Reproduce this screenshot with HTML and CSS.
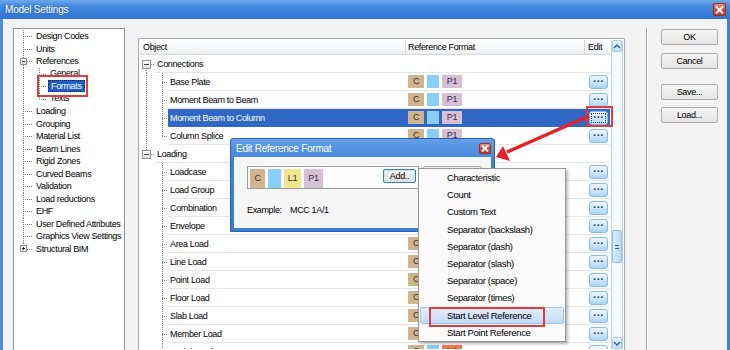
FILE: index.html
```html
<!DOCTYPE html>
<html lang="en">
<head>
  <meta charset="UTF-8">
  <title>Model Settings</title>
  <link rel="stylesheet" href="styles.css">
</head>
<body>

  <div class="window">
    <div class="titlebar">
      <span class="title">Model Settings</span>
      <span class="close">
        <svg width="9" height="8" viewBox="0 0 9 8"><path d="M1 0.5 L8 7.5 M8 0.5 L1 7.5" stroke="#fff" stroke-width="2"/></svg>
      </span>
    </div>

    <div class="frame">
      <!-- Settings tree -->
      <div class="nav">
        <ul class="tree">
          <li class="top"><span class="gut"></span><span class="lbl">Design Codes</span></li>
          <li class="top"><span class="gut"></span><span class="lbl">Units</span></li>
          <li class="top open"><span class="gut"><span class="exp"></span></span><span class="lbl">References</span></li>
          <li class="sub"><span class="gut"></span><span class="lbl">General</span></li>
          <li class="sub"><span class="gut"></span><span class="lbl picked">Formats</span></li>
          <li class="sub end"><span class="gut"></span><span class="lbl">Texts</span></li>
          <li class="top"><span class="gut"></span><span class="lbl">Loading</span></li>
          <li class="top"><span class="gut"></span><span class="lbl">Grouping</span></li>
          <li class="top"><span class="gut"></span><span class="lbl">Material List</span></li>
          <li class="top"><span class="gut"></span><span class="lbl">Beam Lines</span></li>
          <li class="top"><span class="gut"></span><span class="lbl">Rigid Zones</span></li>
          <li class="top"><span class="gut"></span><span class="lbl">Curved Beams</span></li>
          <li class="top"><span class="gut"></span><span class="lbl">Validation</span></li>
          <li class="top"><span class="gut"></span><span class="lbl">Load reductions</span></li>
          <li class="top"><span class="gut"></span><span class="lbl">EHF</span></li>
          <li class="top"><span class="gut"></span><span class="lbl">User Defined Attributes</span></li>
          <li class="top"><span class="gut"></span><span class="lbl">Graphics View Settings</span></li>
          <li class="top end closed"><span class="gut"><span class="exp plus"></span></span><span class="lbl">Structural BIM</span></li>
        </ul>
      </div>

      <!-- Reference format grid -->
      <div class="grid">
        <div class="grid-main">
          <div class="grid-head">
            <div class="hc hc-obj">Object</div>
            <div class="hc hc-ref">Reference Format</div>
            <div class="hc hc-edit">Edit</div>
          </div>

          <div class="row grp first"><span class="gut"><span class="exp"></span></span><div class="cell"><span class="name">Connections</span></div></div>
          <div class="row c-mid"><span class="gut"></span><div class="cell"><span class="name">Base Plate</span><span class="fmt"><i class="chip tan">C</i><i class="chip sky"></i><i class="chip thistle">P1</i></span><span class="edit"><b class="dots">···</b></span></div></div>
          <div class="row c-mid"><span class="gut"></span><div class="cell"><span class="name">Moment Beam to Beam</span><span class="fmt"><i class="chip tan">C</i><i class="chip sky"></i><i class="chip thistle">P1</i></span><span class="edit"><b class="dots">···</b></span></div></div>
          <div class="row c-mid selected"><span class="gut"></span><div class="cell"><span class="name">Moment Beam to Column</span><span class="fmt"><i class="chip tan">C</i><i class="chip sky"></i><i class="chip thistle">P1</i></span><span class="edit"><b class="dots focus">···</b></span></div></div>
          <div class="row c-mid-end"><span class="gut"></span><div class="cell"><span class="name">Column Splice</span><span class="fmt"><i class="chip tan">C</i><i class="chip sky"></i><i class="chip thistle">P1</i></span><span class="edit"><b class="dots">···</b></span></div></div>
          <div class="row grp last"><span class="gut"><span class="exp"></span></span><div class="cell"><span class="name">Loading</span></div></div>
          <div class="row c"><span class="gut"></span><div class="cell"><span class="name">Loadcase</span><span class="fmt"><i class="chip tan">C</i><i class="chip sky"></i><i class="chip khaki">L1</i></span><span class="edit"><b class="dots">···</b></span></div></div>
          <div class="row c"><span class="gut"></span><div class="cell"><span class="name">Load Group</span><span class="fmt"><i class="chip tan">C</i><i class="chip sky"></i><i class="chip khaki">L1</i></span><span class="edit"><b class="dots">···</b></span></div></div>
          <div class="row c"><span class="gut"></span><div class="cell"><span class="name">Combination</span><span class="fmt"><i class="chip tan">C</i><i class="chip sky"></i><i class="chip khaki">L1</i></span><span class="edit"><b class="dots">···</b></span></div></div>
          <div class="row c"><span class="gut"></span><div class="cell"><span class="name">Envelope</span><span class="fmt"><i class="chip tan">C</i><i class="chip sky"></i><i class="chip khaki">L1</i></span><span class="edit"><b class="dots">···</b></span></div></div>
          <div class="row c"><span class="gut"></span><div class="cell"><span class="name">Area Load</span><span class="fmt"><i class="chip tan">C</i><i class="chip sky"></i><i class="chip khaki">L1</i></span><span class="edit"><b class="dots">···</b></span></div></div>
          <div class="row c"><span class="gut"></span><div class="cell"><span class="name">Line Load</span><span class="fmt"><i class="chip tan">C</i><i class="chip sky"></i><i class="chip khaki">L1</i></span><span class="edit"><b class="dots">···</b></span></div></div>
          <div class="row c"><span class="gut"></span><div class="cell"><span class="name">Point Load</span><span class="fmt"><i class="chip tan">C</i><i class="chip sky"></i><i class="chip khaki">L1</i></span><span class="edit"><b class="dots">···</b></span></div></div>
          <div class="row c"><span class="gut"></span><div class="cell"><span class="name">Floor Load</span><span class="fmt"><i class="chip tan">C</i><i class="chip sky"></i><i class="chip khaki">L1</i></span><span class="edit"><b class="dots">···</b></span></div></div>
          <div class="row c"><span class="gut"></span><div class="cell"><span class="name">Slab Load</span><span class="fmt"><i class="chip tan">C</i><i class="chip sky"></i><i class="chip khaki">L1</i></span><span class="edit"><b class="dots">···</b></span></div></div>
          <div class="row c"><span class="gut"></span><div class="cell"><span class="name">Member Load</span><span class="fmt"><i class="chip tan">C</i><i class="chip sky"></i><i class="chip khaki">L1</i></span><span class="edit"><b class="dots">···</b></span></div></div>
          <div class="row c"><span class="gut"></span><div class="cell"><span class="name">Nodal Load</span><span class="fmt"><i class="chip tan">C</i><i class="chip sky"></i><i class="chip tomato">N1</i></span><span class="edit"><b class="dots">···</b></span></div></div>
        </div>

        <div class="vscroll">
          <div class="track">
            <span class="sbtn"><svg width="8" height="5" viewBox="0 0 8 5"><path d="M1 4 L4 1 L7 4" fill="none" stroke="#2b5b9a" stroke-width="1.4"/></svg></span>
            <span class="thumb"></span>
            <span class="sbtn down"><svg width="8" height="5" viewBox="0 0 8 5"><path d="M1 1 L4 4 L7 1" fill="none" stroke="#2b5b9a" stroke-width="1.4"/></svg></span>
          </div>
        </div>
      </div>

      <div class="divider"></div>

      <div class="actions">
        <button class="btn">OK</button>
        <button class="btn cancel">Cancel</button>
        <button class="btn save">Save...</button>
        <button class="btn load">Load...</button>
      </div>
    </div>

    <!-- Edit Reference Format dialog -->
    <div class="dialog">
      <div class="dlg-title">
        <span class="dlg-name">Edit Reference Format</span>
        <span class="dlg-close">
          <svg width="8" height="7" viewBox="0 0 8 7"><path d="M1 0.5 L7 6.5 M7 0.5 L1 6.5" stroke="#fff" stroke-width="1.8"/></svg>
        </span>
      </div>
      <div class="dlg-body">
        <div class="dlg-row">
          <div class="fmt-box">
            <i class="dchip tan">C</i><i class="dchip sky sep"></i><i class="dchip khaki">L1</i><i class="dchip thistle">P1</i>
            <button class="add-btn">Add..</button>
          </div>
          <button class="dlg-btn">Remove</button>
        </div>
        <div class="example"><span class="ex-lbl">Example:</span><span>MCC 1A/1</span></div>
      </div>
    </div>

    <!-- Add.. dropdown -->
    <ul class="menu">
      <li>Characteristic</li>
      <li>Count</li>
      <li>Custom Text</li>
      <li>Separator (backslash)</li>
      <li>Separator (dash)</li>
      <li>Separator (slash)</li>
      <li>Separator (space)</li>
      <li>Separator (times)</li>
      <li class="hot">Start Level Reference</li>
      <li>Start Point Reference</li>
    </ul>

    <!-- Red callouts -->
    <svg class="marks" width="730" height="350" viewBox="0 0 730 350">
      <g fill="none" stroke="#e23b3e" stroke-width="2">
        <rect x="38" y="76" width="49" height="20"/>
        <rect x="587" y="107" width="25" height="19"/>
        <rect x="430" y="308" width="114" height="18"/>
      </g>
      <line x1="589" y1="116" x2="507" y2="152" stroke="#e8202a" stroke-width="3.5"/>
      <polygon points="496,157 503,146 510,161" fill="#e8202a"/>
    </svg>
  </div>

</body>
</html>
```

FILE: styles.css
```css
:root {
  --dv: repeating-linear-gradient(to bottom, #858585 0 1px, transparent 1px 2px);
  --dh: repeating-linear-gradient(to right, #858585 0 1px, transparent 1px 2px);
}

body {
  margin: 0;
  font-family: 'Liberation Sans', Arial, sans-serif;
  font-size: 9px;
  letter-spacing: -0.35px;
  color: #000;
}

.window {
  position: relative;
  width: 730px;
  height: 350px;
  overflow: hidden;
  background: linear-gradient(to right, #4a8ee0, #3c80d8);
}

.titlebar {
  height: 19px;
  display: flex;
  align-items: center;
  padding: 0 4px 0 5px;
  background: linear-gradient(#6ea8ec, #4288de 35%, #2f75d4);
  color: #fff;
  font-size: 10px;
  letter-spacing: -0.2px;
}

.title {
  flex: 1;
  text-shadow: 0 0 3px rgba(0, 0, 40, 0.35);
}

.close {
  width: 13px;
  height: 13px;
  box-sizing: border-box;
  display: flex;
  align-items: center;
  justify-content: center;
  border: 1px solid #9a2e22;
  border-radius: 2px;
  background: linear-gradient(#ee9080, #d34b35 50%, #c23a24);
}

.frame {
  display: flex;
  align-items: flex-start;
  height: 331px;
  margin: 0 3px;
  background: #f3f3f3;
  overflow: hidden;
}

/* ---- left tree ---- */
.nav {
  flex: none;
  width: 112px;
  height: 340px;
  margin: 9px 0 0 10px;
  box-sizing: border-box;
  border: 1px solid #8d9298;
  background: #fff;
  padding-top: 1px;
}

.tree {
  list-style: none;
  margin: 0;
  padding: 0;
}

.tree li {
  display: flex;
  align-items: center;
  height: 12.5px;
  white-space: nowrap;
}

.tree .gut {
  flex: none;
  height: 100%;
  display: flex;
  align-items: center;
}

.tree .top .gut {
  width: 22px;
  background: var(--dv) 9px 0 / 1px 100% no-repeat, var(--dh) 9px 6px / 10px 1px no-repeat;
}

.tree .top.open .gut {
  background: var(--dv) 9px 0 / 1px 100% no-repeat, var(--dh) 13px 6px / 6px 1px no-repeat;
}

.tree .top.closed .gut {
  background: var(--dv) 9px 0 / 1px 3px no-repeat, var(--dh) 13px 6px / 6px 1px no-repeat;
}

.tree .sub .gut {
  width: 34px;
  background: var(--dv) 9px 0 / 1px 100% no-repeat, var(--dv) 25px 0 / 1px 100% no-repeat, var(--dh) 25px 6px / 8px 1px no-repeat;
}

.tree .sub.end .gut {
  background: var(--dv) 9px 0 / 1px 100% no-repeat, var(--dv) 25px 0 / 1px 7px no-repeat, var(--dh) 25px 6px / 8px 1px no-repeat;
}

.tree .exp {
  width: 7px;
  height: 7px;
  margin-left: 6px;
  box-sizing: border-box;
  border: 1px solid #8f8f8f;
  background: linear-gradient(#333, #333) center / 3px 1px no-repeat, linear-gradient(#fff, #e4e4e4);
}

.tree .exp.plus {
  background: linear-gradient(#333, #333) center / 3px 1px no-repeat, linear-gradient(#333, #333) center / 1px 3px no-repeat, linear-gradient(#fff, #e4e4e4);
}

.tree .sub .lbl {
  padding: 0 2px;
  line-height: 11px;
}

.tree .lbl.picked {
  width: 37px;
  box-sizing: border-box;
  background: #1a5fd2;
  color: #fff;
  border: 1px dotted #222;
  line-height: 10px;
}

/* ---- grid ---- */
.grid {
  flex: none;
  display: flex;
  width: 487px;
  height: 313px;
  margin: 19px 0 0 13px;
  box-sizing: border-box;
  border: 1px solid #a4abb4;
  padding: 1px;
  background: #fff;
}

.grid-main {
  width: 470px;
  display: flex;
  flex-direction: column;
  overflow: hidden;
}

.grid-head {
  flex: none;
  display: flex;
  height: 15px;
  box-sizing: border-box;
  border-bottom: 1px solid #d5d5d5;
  background: linear-gradient(#fff, #eef0f2);
}

.hc {
  box-sizing: border-box;
  border-right: 1px solid #d5d5d5;
  padding-left: 3px;
  line-height: 14px;
}

.hc-obj { width: 266px; }
.hc-ref { width: 179px; padding-left: 2px; }
.hc-edit { width: 25px; border-right: none; }

.row {
  flex: none;
  display: flex;
  height: 18px;
}

.row .gut {
  flex: none;
  height: 100%;
}

.cell {
  flex: 1;
  min-width: 0;
  display: flex;
  align-items: center;
  box-sizing: border-box;
  border-bottom: 1px solid #e5e5e5;
  white-space: nowrap;
}

.name {
  flex: 1;
  padding-left: 2px;
}

.grp .gut {
  width: 15px;
  display: flex;
  align-items: center;
}

.grp.first .gut {
  background: var(--dh) 11px 9px / 4px 1px no-repeat, var(--dv) 6px 13px / 1px 5px no-repeat;
}

.grp.last .gut {
  background: var(--dh) 11px 9px / 4px 1px no-repeat, var(--dv) 6px 0 / 1px 5px no-repeat;
}

.grp .exp {
  width: 9px;
  height: 9px;
  margin-left: 2px;
  box-sizing: border-box;
  border: 1px solid #919191;
  background: linear-gradient(#444, #444) center / 5px 1px no-repeat, linear-gradient(#fff, #e2e2e2);
}

.c-mid .gut,
.c-mid-end .gut,
.c .gut {
  width: 28px;
}

.c-mid .gut {
  background: var(--dv) 6px 0 / 1px 100% no-repeat, var(--dv) 22px 0 / 1px 100% no-repeat, var(--dh) 22px 9px / 6px 1px no-repeat;
}

.c-mid-end .gut {
  background: var(--dv) 6px 0 / 1px 100% no-repeat, var(--dv) 22px 0 / 1px 10px no-repeat, var(--dh) 22px 9px / 6px 1px no-repeat;
}

.c .gut {
  background: var(--dv) 22px 0 / 1px 100% no-repeat, var(--dh) 22px 9px / 6px 1px no-repeat;
}

.selected .cell {
  background: #3168c6;
  border-bottom-color: #3168c6;
}

.selected .name {
  color: #fff;
}

.fmt {
  flex: none;
  width: 179px;
  box-sizing: border-box;
  display: flex;
  gap: 3px;
  padding-left: 2px;
}

.chip {
  display: block;
  height: 13px;
  font-style: normal;
  line-height: 13px;
  text-align: center;
  color: #333;
}

.chip.tan { width: 16px; }
.chip.sky { width: 12px; }
.chip.thistle,
.chip.khaki,
.chip.tomato { width: 20px; }

.tan { background: #d2b48c; }
.sky { background: #87cefa; }
.khaki { background: #f0e68c; }
.thistle { background: #d8bfd8; }
.tomato { background: #f6754f; }

.edit {
  flex: none;
  width: 25px;
  padding-left: 4px;
  box-sizing: border-box;
}

.dots {
  display: block;
  width: 19px;
  height: 14px;
  box-sizing: border-box;
  border: 1px solid #86b9e6;
  border-radius: 3px;
  background: linear-gradient(#eef7fe, #cfe7fb 50%, #acd5f7);
  color: #1d3f7a;
  font-size: 11px;
  font-weight: bold;
  letter-spacing: 0;
  line-height: 11px;
  text-align: center;
}

.dots.focus {
  outline: 1px dotted #444;
  outline-offset: -3px;
}

/* ---- scrollbar ---- */
.vscroll {
  flex: none;
  width: 13px;
  padding-left: 1px;
  box-sizing: border-box;
}

.track {
  height: 100%;
  box-sizing: border-box;
  display: flex;
  flex-direction: column;
  border-left: 1px solid #b6d3ee;
  border-right: 1px solid #b6d3ee;
  background: #f6f9fd;
}

.sbtn {
  flex: none;
  height: 12px;
  box-sizing: border-box;
  display: flex;
  align-items: center;
  justify-content: center;
  border: 1px solid #a3cbed;
  border-radius: 2px;
  background: linear-gradient(#eef6fe, #c7e1f9);
}

.sbtn.down {
  margin-top: auto;
}

.thumb {
  flex: none;
  height: 33px;
  margin-top: 178px;
  box-sizing: border-box;
  border: 1px solid #8fbfe9;
  border-radius: 2px;
  background:
    linear-gradient(#2d5c98, #2d5c98) center 14px / 4px 1px no-repeat,
    linear-gradient(#2d5c98, #2d5c98) center 17px / 4px 1px no-repeat,
    linear-gradient(to right, #d8ecfd, #b9dbf9);
}

/* ---- right buttons ---- */
.divider {
  flex: none;
  width: 2px;
  height: 340px;
  margin: 9px 0 0 21px;
  box-sizing: border-box;
  border-left: 1px solid #a3a3a3;
  border-right: 1px solid #fff;
}

.actions {
  flex: none;
  width: 57px;
  margin: 10px 0 0 13px;
  display: flex;
  flex-direction: column;
}

.btn {
  height: 16px;
  padding: 0;
  box-sizing: border-box;
  border: 1px solid #acacac;
  border-radius: 2px;
  background: linear-gradient(#f5f5f5, #e4e4e4);
  font: inherit;
  letter-spacing: inherit;
  color: #000;
  line-height: 14px;
}

.btn.cancel { margin-top: 8px; }
.btn.save { margin-top: 15px; }
.btn.load { margin-top: 7px; }

/* ---- dialog ---- */
.dialog {
  position: absolute;
  left: 230px;
  top: 138px;
  width: 265px;
  height: 94px;
  box-sizing: border-box;
  display: flex;
  flex-direction: column;
  padding: 0 3px 3px;
  border: 1px solid #2c5fae;
  border-radius: 3px 3px 0 0;
  background: linear-gradient(#64a0e8, #3f83da 25%, #3a7dd6);
}

.dlg-title {
  flex: none;
  height: 18px;
  display: flex;
  align-items: center;
  padding-left: 2px;
  color: #fff;
  font-size: 10px;
  letter-spacing: -0.25px;
}

.dlg-name {
  flex: 1;
}

.dlg-close {
  width: 12px;
  height: 11px;
  box-sizing: border-box;
  display: flex;
  align-items: center;
  justify-content: center;
  border: 1px solid #9a2e22;
  border-radius: 2px;
  background: linear-gradient(#ee9080, #d34b35 50%, #c23a24);
}

.dlg-body {
  flex: 1;
  padding: 9px 0 0 13px;
  background: #f6f6f6;
}

.dlg-row {
  display: flex;
  align-items: flex-start;
}

.fmt-box {
  width: 172px;
  height: 23px;
  box-sizing: border-box;
  display: flex;
  align-items: flex-start;
  gap: 3px;
  padding: 2px 2px 0;
  border: 1px solid #9e9e9e;
  background: #fdfdfd;
}

.dchip {
  display: block;
  height: 19px;
  font-style: normal;
  line-height: 19px;
  text-align: center;
  color: #333;
}

.dchip.tan { width: 15px; }
.dchip.sep { width: 13px; }
.dchip.khaki { width: 17px; }
.dchip.thistle { width: 19px; }

.add-btn {
  width: 33px;
  height: 14px;
  margin-left: auto;
  padding: 0;
  box-sizing: border-box;
  border: 1px solid #3c7fb1;
  border-radius: 2px;
  background: linear-gradient(#f4f4f4, #dedede);
  box-shadow: inset 0 0 0 1px #c9e6f7;
  font: inherit;
  letter-spacing: inherit;
  line-height: 12px;
  color: #000;
}

.dlg-btn {
  width: 59px;
  height: 16px;
  margin-left: 4px;
  padding: 0;
  border: 1px solid #aaa;
  border-radius: 2px;
  background: linear-gradient(#f4f4f4, #dfdfdf);
  font: inherit;
  letter-spacing: inherit;
}

.example {
  margin-top: 15px;
  line-height: 12px;
  display: flex;
}

.ex-lbl {
  width: 43px;
}

/* ---- dropdown ---- */
.menu {
  position: absolute;
  left: 418px;
  top: 168px;
  width: 148px;
  margin: 0;
  padding: 0 1px;
  box-sizing: border-box;
  list-style: none;
  border: 1px solid #979797;
  background: #fafafa;
  box-shadow: 2px 2px 3px rgba(0, 0, 0, 0.28);
  font-size: 9.5px;
}

.menu li {
  height: 17.2px;
  box-sizing: border-box;
  display: flex;
  align-items: center;
  padding-left: 27px;
  white-space: nowrap;
}

.menu li.hot {
  padding-left: 26px;
  border: 1px solid #9ec3ec;
  border-radius: 2px;
  background: linear-gradient(#e3eefb, #c4dbf5);
}

.marks {
  position: absolute;
  left: 0;
  top: 0;
  pointer-events: none;
}
```
